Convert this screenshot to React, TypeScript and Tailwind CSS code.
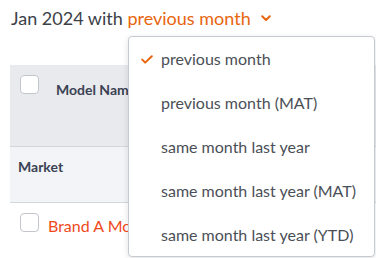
import React from "react";

const options = [
  "previous month",
  "previous month (MAT)",
  "same month last year",
  "same month last year (MAT)",
  "same month last year (YTD)",
];

const Checkbox = () => (
  <div className="w-[19px] h-[19px] rounded-[4px] border border-[#c3c6cd] bg-white shrink-0" />
);

export default function App() {
  const selected = 0;

  return (
    <div
      className="relative w-[376px] h-[258px] overflow-hidden bg-white"
      style={{ fontFamily: "Lato, 'Noto Sans', sans-serif" }}
    >
      <div className="pl-[11px] pt-[6px] h-[65px] text-[18px] leading-[24px] text-[#3b3f47] flex items-start">
        <span>Jan 2024 with&nbsp;</span>
        <span className="text-[#e8650e] flex items-center">
          previous month
          <svg width="10" height="7" viewBox="0 0 10 7" className="ml-[10px] mt-[1px]">
            <polyline points="1.2,1.2 5,5 8.8,1.2" fill="none" stroke="#e8650e" strokeWidth="2" strokeLinecap="round" strokeLinejoin="round" />
          </svg>
        </span>
      </div>

      <div className="ml-[10px]">
        <div className="h-[82px] bg-[#e9eaee] border-b border-[#d3d6dc] flex items-start pt-[10px] pl-[10px]">
          <Checkbox />
          <span className="ml-[17px] mt-[6px] text-[14px] leading-[18px] font-bold text-[#3a4253]">Model Name</span>
        </div>
        <div className="h-[56px] bg-[#f3f4f7] border-b border-[#d3d6dc] pl-[8px] pt-[7px]">
          <span className="text-[14px] leading-[18px] font-bold text-[#3a4253]">Market</span>
        </div>
        <div className="flex items-start pt-[10px] pl-[10px]">
          <Checkbox />
          <span className="ml-[9px] mt-[3px] text-[16px] leading-[20px] text-[#f04a1c]">Brand A Model</span>
        </div>
      </div>

      <div className="absolute left-[128px] top-[36px] w-[247px] h-[221px] bg-white border border-[#c6cad1] rounded-[4px] shadow-[0_2px_6px_rgba(0,0,0,0.12)]">
        {options.map((opt, i) => (
          <div key={opt} className="h-[44px] flex items-center text-[16px] text-[#4b4f57]">
            <div className="w-[32px] flex justify-end pr-[8px]">
              {i === selected && (
                <svg width="12" height="9" viewBox="0 0 12 9">
                  <polyline points="1.2,4.6 4.2,7.6 10.8,1.2" fill="none" stroke="#e8650e" strokeWidth="2" strokeLinecap="round" strokeLinejoin="round" />
                </svg>
              )}
            </div>
            <span>{opt}</span>
          </div>
        ))}
      </div>
    </div>
  );
}
